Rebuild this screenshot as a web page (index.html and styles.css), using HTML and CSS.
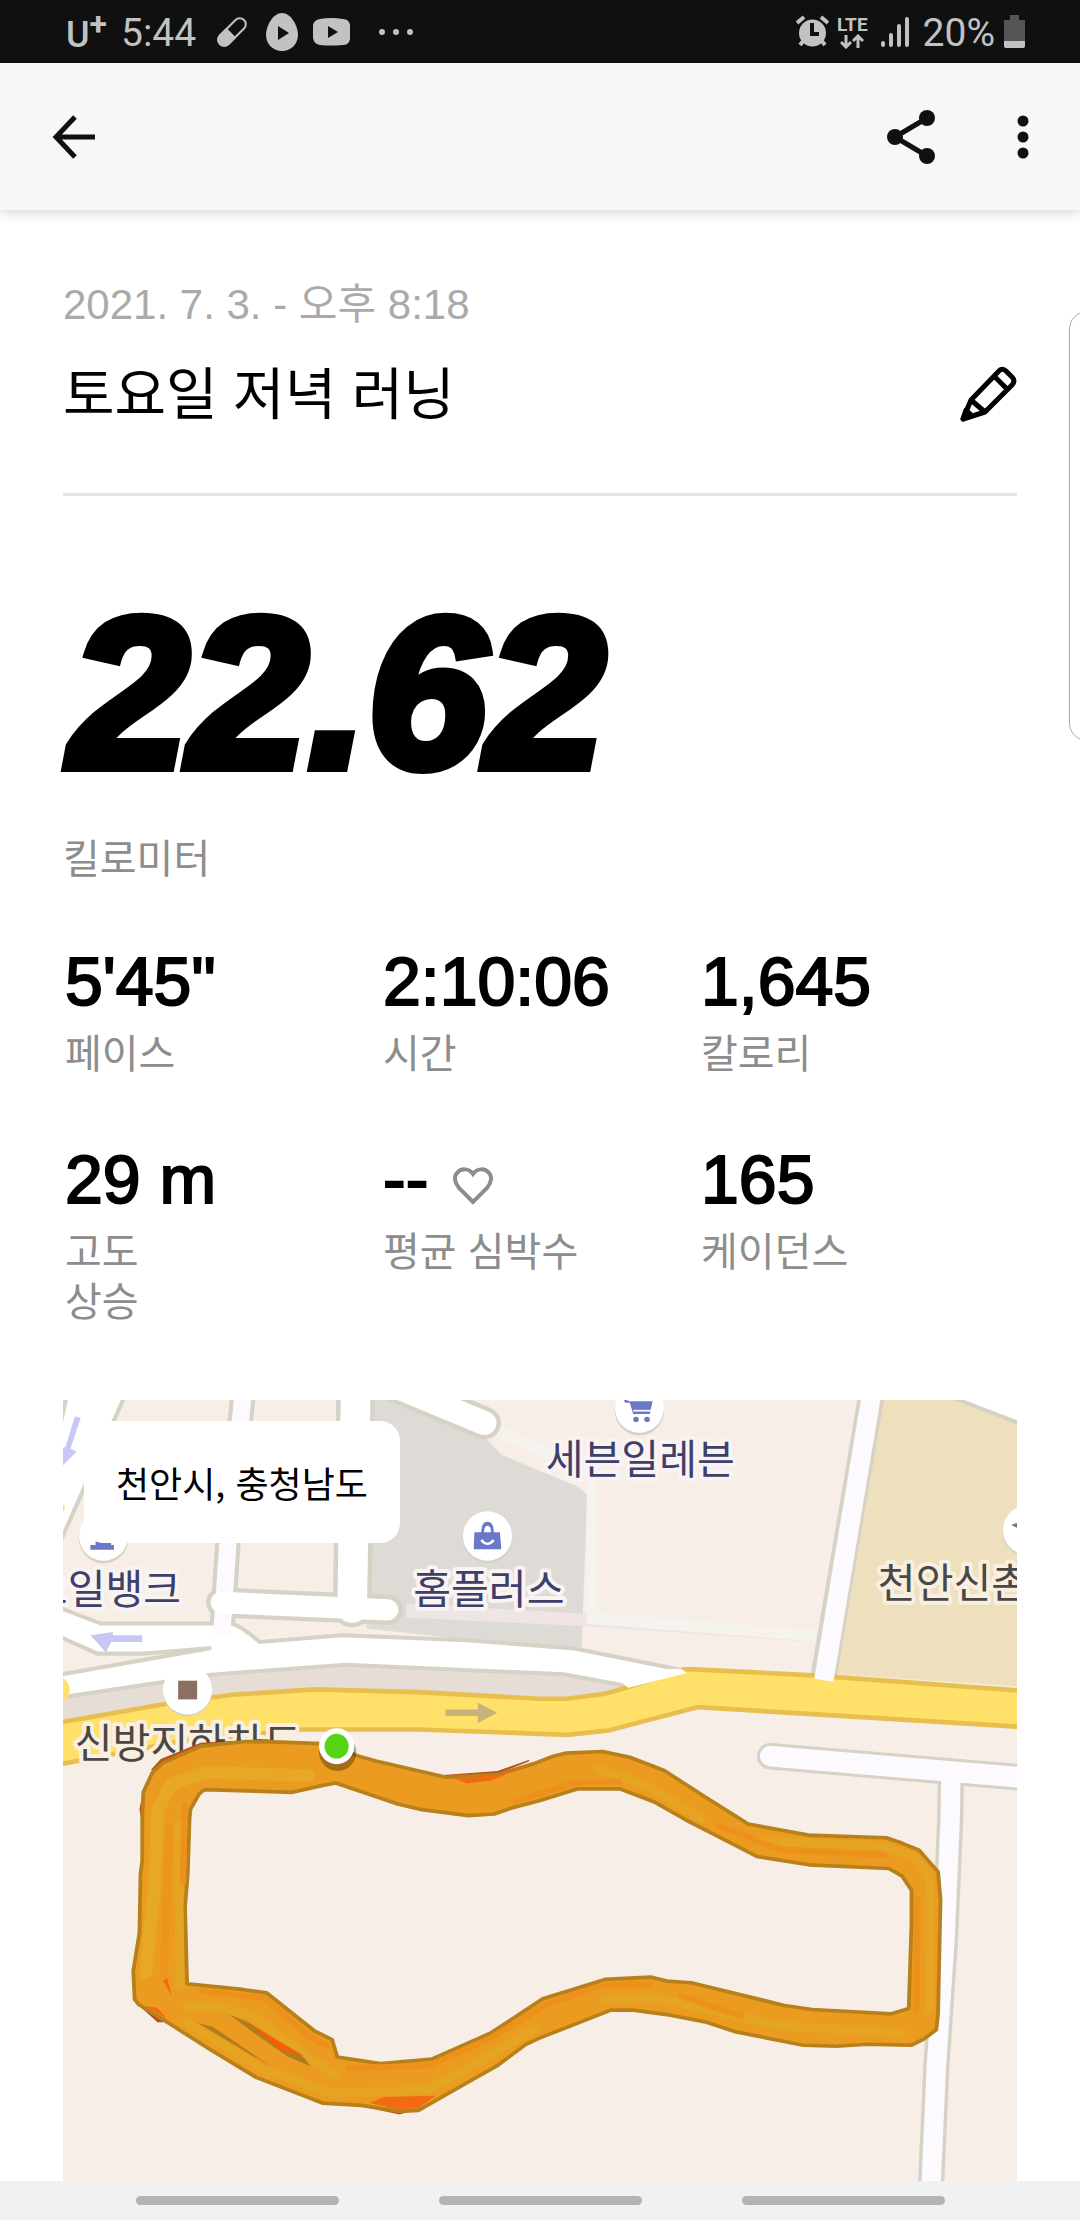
FILE: index.html
```html
<!DOCTYPE html>
<html lang="ko">
<head>
<meta charset="utf-8">
<meta name="viewport" content="width=device-width, initial-scale=1">
<title>토요일 저녁 러닝</title>
<link rel="stylesheet" href="styles.css">
</head>
<body>
<div class="status">
  <div class="status-group">
    <span class="carrier">U<span class="carrier-plus">+</span></span>
    <span class="status-text clock">5:44</span>
    <svg class="ico-pill" width="32" height="32" viewBox="0 0 32 32" aria-hidden="true"><g transform="rotate(-45 16 16)"><rect x="-1" y="10" width="34" height="12" rx="6" fill="none" stroke="#c2c2c2" stroke-width="2"/><path d="M15 9H5a7 7 0 0 0 0 14h10z" fill="#c2c2c2"/></g></svg>
    <svg class="ico-egg" width="32" height="38" viewBox="0 0 32 38" aria-hidden="true"><path d="M16 0c9 0 16 13 16 22S25 38 16 38 0 31 0 22 7 0 16 0z" fill="#c2c2c2"/><path d="M12 13l11 7-11 7z" fill="#101010"/></svg>
    <svg class="ico-tube" width="37" height="28" viewBox="0 0 37 28" aria-hidden="true"><path d="M7 1Q18-1 30 1q6 0 7 6v14q-1 6-7 6-12 1-23 0-6-1-7-7V7Q1 2 7 1z" fill="#c2c2c2"/><path d="M15 8l10 6-10 6z" fill="#101010"/></svg>
    <svg width="34" height="8" viewBox="0 0 34 8" aria-hidden="true" fill="#c2c2c2"><circle cx="3" cy="4" r="3"/><circle cx="17" cy="4" r="3"/><circle cx="31" cy="4" r="3"/></svg>
  </div>
  <div class="status-group">
    <svg width="33" height="33" viewBox="0 0 33 33" aria-hidden="true"><path d="M8 25l-4 5M25 25l4 5" stroke="#c2c2c2" stroke-width="4"/><circle cx="16.500" cy="18" r="13.500" fill="#c2c2c2"/><path d="M1 8l7-6M32 8l-7-6" stroke="#c2c2c2" stroke-width="4"/><path d="M16 8v11h7" fill="none" stroke="#101010" stroke-width="4"/></svg>
    <span class="lte"><span>LTE</span><svg width="24" height="15" viewBox="0 0 24 15" aria-hidden="true" fill="none" stroke="#c2c2c2" stroke-width="3"><path d="M6 1v11M1 8l5 5 5-5M18 14V3M13 7l5-5 5 5"/></svg></span>
    <svg class="ico-signal" width="28" height="32" viewBox="0 0 28 32" aria-hidden="true" stroke="#c2c2c2" stroke-width="4" stroke-linecap="round"><path d="M2 27v2M10 19v10M18 10v19M26 3v26"/></svg>
    <span class="status-text">20%</span>
    <svg class="ico-battery" width="21" height="33" viewBox="0 0 21 33" aria-hidden="true"><path d="M6 0h9v5h6v22H0V5h6z" fill="#555"/><path d="M0 26h21v5q0 2-2 2H2q-2 0-2-2z" fill="#c2c2c2"/></svg>
  </div>
</div>

<header class="appbar">
  <button class="icon-btn" aria-label="뒤로"><svg width="44" height="44" viewBox="0 0 44 44" fill="none" stroke="#101010" stroke-width="5"><path d="M43 22H5M23 2L4 22l19 20"/></svg></button>
  <div class="appbar-actions">
    <button class="icon-btn" aria-label="공유"><svg width="48" height="54" viewBox="0 0 48 54" fill="#101010"><path d="M8 27L40 8M8 27l32 19" stroke="#101010" stroke-width="5"/><circle cx="8" cy="27" r="8"/><circle cx="40" cy="8" r="8"/><circle cx="40" cy="46" r="8"/></svg></button>
    <button class="icon-btn" aria-label="더보기"><svg width="12" height="44" viewBox="0 0 12 44" fill="#101010"><circle cx="6" cy="6" r="5.500"/><circle cx="6" cy="22" r="5.500"/><circle cx="6" cy="38" r="5.500"/></svg></button>
  </div>
</header>

<main class="content">
  <div class="run-head">
    <p class="date">2021. 7. 3. - 오후 8:18</p>
    <div class="title-row">
      <h1 class="title">토요일 저녁 러닝</h1>
      <button class="icon-btn" aria-label="제목 편집"><svg class="pencil" width="58" height="58" viewBox="0 0 58 58" fill="none" stroke="#000" stroke-width="5" stroke-linejoin="round"><path d="M4 53L12 34 39 6Q43 1 47 5l6 6q4 4 0 8L26 46zM35 10l13 13M12 34l14 12"/><path d="M4 53l3-9 6 6z" fill="#000"/></svg></button>
    </div>
  </div>

  <p class="distance">22.62</p>
  <p class="label">킬로미터</p>

  <dl class="stats">
    <div class="stat"><dt class="label">페이스</dt><dd class="value">5'45"</dd></div>
    <div class="stat"><dt class="label">시간</dt><dd class="value">2:10:06</dd></div>
    <div class="stat"><dt class="label">칼로리</dt><dd class="value">1,645</dd></div>
    <div class="stat"><dt class="label">고도<br>상승</dt><dd class="value">29 m</dd></div>
    <div class="stat"><dt class="label">평균 심박수</dt><dd class="value">-- <svg class="heart" width="40" height="38" viewBox="0 0 40 38" fill="none" stroke="#8d8d8d" stroke-width="4" aria-hidden="true"><path d="M20 35L6 21C1 15 1 9 4 6 8 1 16 1 20 7c4-6 12-6 16-1 3 3 3 9-2 15z"/></svg></dd></div>
    <div class="stat"><dt class="label">케이던스</dt><dd class="value">165</dd></div>
  </dl>

  <section class="map" aria-label="러닝 경로 지도">
    <svg class="map-art" viewBox="0 0 954 779" preserveAspectRatio="xMidYMin slice" aria-hidden="true">
      <rect width="954" height="900" fill="#f7eee8"/>
      <g transform="scale(.3444 .3333) translate(-67 -36)">
        <!-- blocks -->
        <path d="M960 20H1040L1300 155 1340 200 1560 295 1589 320 1572 790 950 720z" fill="#dedbd6"/>
        <path d="M1065 645L1572 675 2240 725V760L1572 712 1065 688z" fill="#eee5e4"/>
        <path d="M1330 130L1595 250 1604 300V690L2250 742" fill="none" stroke="#f6f2ed" stroke-width="34"/>
        <path d="M2440 20H2860V895L2300 855z" fill="#eedfbd"/>
        <path d="M2650 30L2850 110V0H2650z" fill="#fff" stroke="#d6d2c6" stroke-width="12"/>
        <path d="M40 930L500 855 890 825 1400 850 1520 855 1720 895 1530 930 800 900 500 925 40 1005z" fill="#e6ddd6"/>
        <!-- side streets -->
        <g fill="none" stroke="#d6d2c6">
          <path d="M592 20L548 465 530 740" stroke-width="74"/>
          <path d="M530 642L1010 664" stroke-width="90" stroke-linecap="round"/>
          <path d="M918 20L908 660" stroke-width="112" stroke-linecap="round"/>
          <path d="M1000-20L1290 105" stroke-width="98" stroke-linecap="round"/>
          <path d="M2412 20L2274 860" stroke-width="76"/>
          <path d="M2120 1102L2860 1167" stroke-width="80" stroke-linecap="round"/>
          <path d="M2642 1150L2640 1290 2625 1650 2600 2030 2583 2420" stroke-width="76"/>
          <path d="M80 30L50 170V490L247 30z" fill="#fff" stroke-width="12"/>
          <path d="M40 650L180 705H560Q590 715 640 760L880 740 1240 755 1552 780 1880 848 1720 895 1520 857 890 828 500 858 40 930V862L500 778 300 795H170L40 735z" fill="#fff" stroke-width="12"/>
        </g>
        <g fill="none" stroke="#fdfaff">
          <path d="M592 20L548 465 530 740" stroke-width="50"/>
          <path d="M530 642L1010 664" stroke="#fff" stroke-width="64" stroke-linecap="round"/>
          <path d="M918 20L908 660" stroke="#fff" stroke-width="86" stroke-linecap="round"/>
          <path d="M1000-20L1290 105" stroke="#fff" stroke-width="72" stroke-linecap="round"/>
          <path d="M2120 1102L2860 1167" stroke-width="62" stroke-linecap="round"/>
          <path d="M2642 1150L2640 1290 2625 1650 2600 2030 2583 2420" stroke-width="56"/>
        </g>
        <!-- main road -->
        <path d="M40 1005L370 945 560 918 800 902 1100 910 1452 930H1530L1640 915 1715 893 1870 842H1900L2242 860 2860 907V1015L2300 980 1910 955 1650 1025 1530 1038 1100 1022H760L400 1060 40 1130z" fill="#ffe16a" stroke="#e8bf4f" stroke-width="14"/>
        <path d="M1708 897L1878 853 1860 840 1650 850z" fill="#fff"/>
        <path d="M2412 20L2274 875" fill="none" stroke="#fdfaff" stroke-width="56"/>
        <path d="M50 855Q92 875 90 905 88 935 50 960z" fill="#ffe16a"/>
        <circle cx="62" cy="358" r="14" fill="#ffe16a"/>
        <!-- direction arrows -->
        <path d="M105 85L122 90 92 182 110 190 67 235V180L78 176zM150 740L215 730V740H300V760H210L195 792z" fill="#c8c8f6"/>
        <path d="M1178 962H1272V942L1328 972 1272 1003V982H1178z" fill="#c7b27b"/>
        <!-- place pins -->
        <g fill="#d5d1cb"><ellipse cx="1740" cy="66" rx="72" ry="76"/><ellipse cx="1300" cy="449" rx="72" ry="76"/><ellipse cx="188" cy="449" rx="72" ry="76"/><ellipse cx="2864" cy="430" rx="72" ry="76"/><ellipse cx="431" cy="908" rx="71" ry="74"/></g>
        <g fill="#fff"><ellipse cx="1740" cy="60" rx="71" ry="74"/><ellipse cx="1300" cy="443" rx="71" ry="74"/><ellipse cx="188" cy="443" rx="71" ry="74"/><ellipse cx="2864" cy="425" rx="71" ry="74"/><ellipse cx="431" cy="903" rx="71" ry="74"/></g>
        <g fill="#6b78c8"><path d="M1262 432H1282Q1282 400 1300 400T1318 432H1336L1340 483H1260z"/><path d="M1694 30L1710 40H1778L1770 78H1722L1712 44H1698z"/><circle cx="1730" cy="94" r="8"/><circle cx="1762" cy="94" r="8"/><path d="M150 484V470H165V440H210V470H218V484z"/></g>
        <path d="M1290 432Q1290 412 1300 412T1310 432z" fill="#fff"/><path d="M1282 455Q1300 478 1318 455" fill="none" stroke="#fff" stroke-width="7"/><path d="M1722 68H1774" stroke="#fff" stroke-width="5"/>
        <rect x="404" y="876" width="55" height="56" fill="#8d6e63"/>
        <path d="M2817 410L2850 396V426z" fill="#8d6e63"/>
      </g>
      <g class="place">
        <text x="577" y="74" text-anchor="middle">세븐일레븐</text>
        <text x="426" y="203" text-anchor="middle">홈플러스</text>
        <text x="119" y="203" text-anchor="end">오일뱅크</text>
        <g class="place-dark"><text x="13" y="357">신방지하차도</text><text x="814" y="197">천안신촌</text></g>
      </g>
      <g transform="scale(.3444 .3333) translate(-67 -36)">
        <!-- recorded route -->
        <path d="M330 1140L355 1112 470 1064 660 1053 700 1060 400 1120zM298 1240L294 1260 300 1300zM290 1845L345 1896H362L380 1880zM1420 1115L1330 1148 1180 1160 1240 1190zM930 2147L1045 2172 1080 2162 1000 2130zM1870 1285L1885 1302 1990 1355z" fill="#bd4f14" stroke="#bd4f14" stroke-width="4"/>
        <path fill-rule="evenodd" fill="#ea9b20" stroke="#b8801b" stroke-width="11" stroke-linejoin="round" d="M860 1066L700 1060 600 1058 470 1072 360 1122 330 1150 303 1210 300 1290V1415L295 1455 292 1630 274 1745 278 1830 290 1845 360 1890 500 1982 630 2063 822 2140 935 2147 1045 2165 1100 2162 1270 2062 1330 2027 1410 1965 1452 1945 1657 1862H1722L1830 1877 1930 1897 2020 1927 2215 1967 2310 1970 2400 1964 2527 1967 2565 1948 2600 1920 2605 1870 2612 1530 2605 1448 2550 1383 2500 1362 2455 1346 2230 1338 2055 1305 1932 1225 1812 1145 1712 1105 1634 1088 1525 1093 1490 1102 1440 1122 1330 1157 1180 1165 980 1117 920 1100zM860 1182L820 1190 735 1210 480 1202 465 1215 440 1260 437 1290 432 1450 424 1555 430 1783 590 1800 660 1810 800 1925 850 1950 865 2002 990 2022 1140 2008 1310 1930 1460 1828 1640 1770 1772 1763 1820 1775 1890 1780 2160 1848 2240 1860 2470 1873 2520 1857 2528 1600V1503L2500 1460 2462 1438 2230 1427 2080 1402 1870 1290 1785 1240 1685 1200H1560L1450 1235 1370 1257 1320 1275 1245 1280 1110 1262 1040 1245z"/>
        <g fill="none" stroke-linejoin="round" stroke-linecap="round">
          <path d="M780 1160L480 1150 385 1185 345 1260 335 1500 310 1750" stroke="#e6a825" stroke-width="38"/>
          <path d="M405 1310L408 1790M430 1850L520 1850 620 1880 790 2010 860 2055M430 1900L640 2035 850 2112 1130 2100 1320 1990 1440 1915M1640 1830L1790 1825 2150 1910 2500 1930M2090 1355L2440 1370 2540 1405 2580 1470 2580 1860" stroke="#e6a423" stroke-width="26"/>
          <path d="M1620 1140L1760 1190 1920 1290" stroke="#e6a423" stroke-width="26"/>
          <path d="M423 1250L418 1480M470 1805L650 1825 790 1945 835 1970M900 2035L1130 2028 1310 1945 1470 1845 1640 1785H1770M1860 1820L2035 1880M1970 1310L2150 1382 2450 1398M2545 1530L2542 1860M1380 1235L1560 1180H1680" stroke="#ed911d" stroke-width="18"/>
          <path d="M378 1320L362 1760" stroke="#eb951d" stroke-width="22"/>
        </g>
        <path d="M1200 1167L1330 1159 1420 1128 1310 1175 1240 1184zM960 2140L1045 2159 1100 2155 1150 2118 1000 2122zM360 1775L372 1765 385 1818zM310 1850L370 1888 345 1855z" fill="#f26a12"/>
        <path d="M460 1900L505 1912 675 2032zM553 1876L610 1900 770 2005 787 2030 720 2000 630 1935z" fill="#b07c1c"/>
        <path d="M612 1904L770 2000 700 1980z" fill="#fa5c08"/>
        <ellipse cx="866" cy="1090" rx="54" ry="56" fill="#000" opacity=".3"/>
        <ellipse cx="863" cy="1072" rx="51" ry="54" fill="#fff"/>
        <ellipse cx="863" cy="1072" rx="35" ry="37" fill="#55d416"/>
      </g>
    </svg>
    <p class="place-card">천안시, 충청남도</p>
  </section>
</main>

<div class="edge-handle" aria-hidden="true"></div>
<nav class="navbar" aria-label="시스템 탐색">
  <button class="nav-pill" aria-label="최근 앱"></button>
  <button class="nav-pill" aria-label="홈"></button>
  <button class="nav-pill" aria-label="이전"></button>
</nav>
</body>
</html>
```
FILE: styles.css
```css
* { box-sizing: border-box; }

body {
  margin: 0;
  min-height: 100vh;
  display: flex;
  flex-direction: column;
  position: relative;
  overflow-x: hidden;
  background: #fff;
  color: #000;
  font-family: "Liberation Sans", "Noto Sans CJK KR", sans-serif;
}

p, h1, dl, dd { margin: 0; font-weight: 400; }

button {
  padding: 0;
  border: 0;
  background: none;
}

svg { display: block; }

/* Status bar */
.status {
  height: 63px;
  padding: 0 55px 0 66px;
  display: flex;
  justify-content: space-between;
  align-items: center;
  background: #101010;
  color: #c2c2c2;
  font-family: Roboto, sans-serif;
}
.status-group { display: flex; align-items: center; }
.status-text { font-size: 39px; line-height: 63px; padding-top: 3px; }
.carrier { display: flex; font-size: 36px; font-weight: 500; line-height: 46px; padding-top: 6px; }
.carrier-plus { font-size: 32px; font-weight: 700; line-height: 24px; }
.clock { margin-left: 14px; }
.ico-pill { margin-left: 20px; }
.ico-egg { margin-left: 18px; }
.ico-tube { margin: 0 29px 0 15px; }
.lte {
  display: flex;
  flex-direction: column;
  align-items: center;
  margin: 0 13px 0 8px;
  font-size: 19px;
  font-weight: 700;
  line-height: 19px;
}
.ico-signal { margin-right: 14px; }
.ico-battery { margin-left: 9px; }

/* App bar */
.appbar {
  height: 147px;
  padding: 0 51px 0 52px;
  display: flex;
  justify-content: space-between;
  align-items: center;
  background: #f7f7f7;
  box-shadow: 0 2px 12px rgba(0, 0, 0, .18);
}
.appbar-actions { display: flex; align-items: center; gap: 82px; }

/* Run summary */
.content {
  flex: 1;
  display: flex;
  flex-direction: column;
  padding: 0 63px;
}
.run-head {
  padding: 70px 0 58px;
  border-bottom: 3px solid #e5e5e5;
}
.date { font-size: 42px; line-height: 50px; color: #aaa; }
.title-row {
  display: flex;
  justify-content: space-between;
  align-items: center;
  padding-top: 25px;
}
.title { font-size: 56px; line-height: 80px; }
.distance {
  margin-top: 90px;
  padding-left: 7px;
  font-size: 214px;
  font-style: italic;
  font-weight: 700;
  line-height: 214px;
  -webkit-text-stroke: 10px #000;
}
.label { font-family: "Noto Sans CJK KR", sans-serif; font-size: 40px; line-height: 50px; color: #8d8d8d; }
.distance + .label { margin-top: 31px; }

.stats {
  display: grid;
  grid-template-columns: repeat(3, 1fr);
  row-gap: 58px;
  margin: 55px 0 76px;
}
.stat {
  display: flex;
  flex-direction: column-reverse;
  justify-content: flex-end;
  padding-left: 2px;
}
.value {
  display: flex;
  align-items: center;
  gap: 25px;
  font-size: 68px;
  line-height: 90px;
  -webkit-text-stroke: 2px #000;
}
.heart { margin-top: 14px; }

/* Map */
.map {
  position: relative;
  flex: 1 0 480px;
  overflow: hidden;
  background: #f7eee8;
}
.map-art { position: absolute; inset: 0; width: 100%; height: 100%; }
.place {
  font-family: "Noto Sans CJK KR", sans-serif;
  font-size: 41px;
  fill: #3d4068;
  stroke: #faf3f3;
  stroke-width: 8px;
  stroke-linejoin: round;
  paint-order: stroke;
}
.place-dark { fill: #4a4744; stroke: #f8efe0; }
.place-card {
  position: absolute;
  top: 21px;
  left: 21px;
  padding: 30px 32px;
  border-radius: 20px;
  background: #fff;
  font-family: "Noto Sans CJK KR", sans-serif;
  font-size: 36px;
  line-height: 62px;
}

/* System chrome */
.edge-handle {
  position: absolute;
  top: 311px;
  right: -30px;
  width: 41px;
  height: 430px;
  border: 1px solid #aaa;
  border-radius: 18px;
}
.navbar {
  height: 39px;
  display: flex;
  justify-content: center;
  align-items: center;
  gap: 100px;
  background: #f1f1f1;
}
.nav-pill { width: 203px; height: 9px; border-radius: 5px; background: #b3b3b3; }
```
